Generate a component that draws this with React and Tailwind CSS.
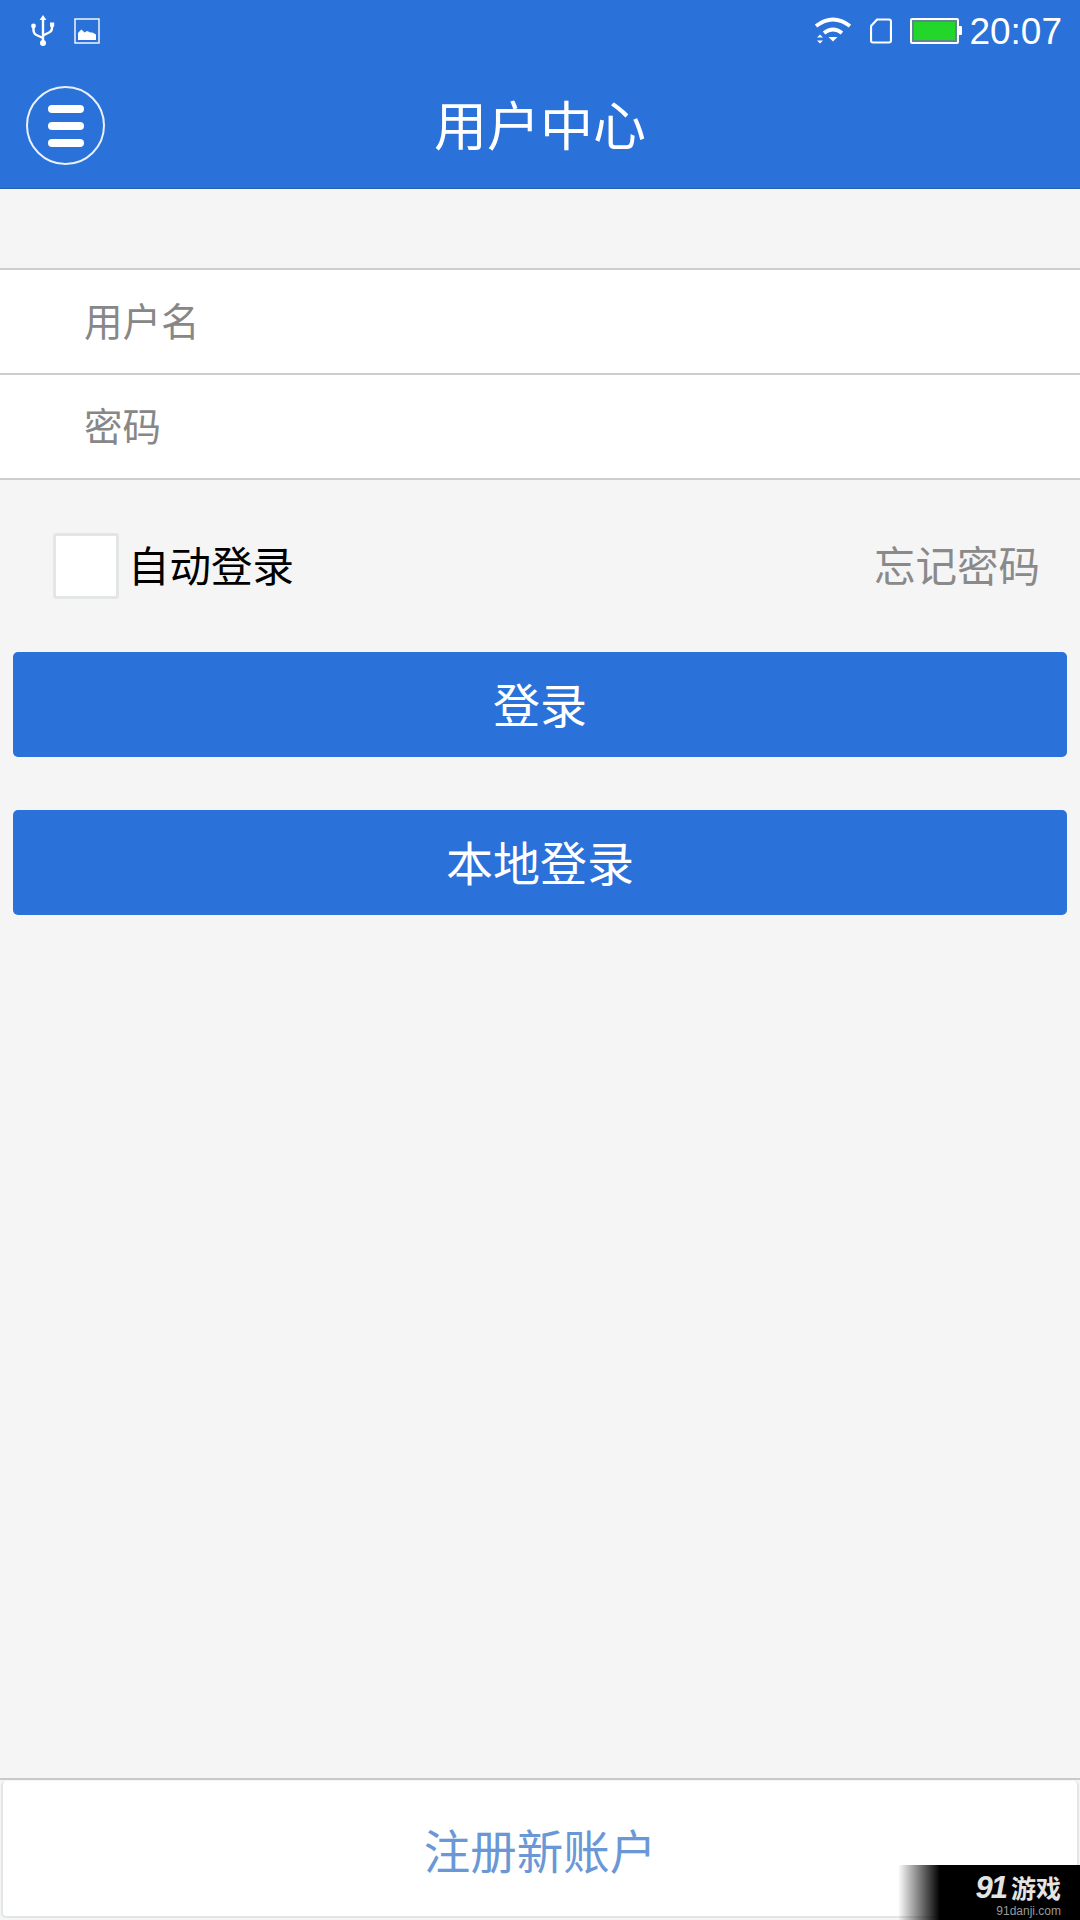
import React from 'react';

const cjk = "font-['Noto_Sans_CJK_SC','Noto_Sans_CJK_JP',sans-serif]";

const StatusBar = () => (
  <div className="flex h-[63px] items-center justify-between pl-[30px] pr-[18px] text-white">
    <div className="flex items-center gap-[18px]">
      {/* usb */}
      <svg width="26" height="32" viewBox="0 0 26 32" fill="none" stroke="white" strokeWidth="2.4" className="mt-[-1px]">
        <path d="M13 3v25" />
        <path d="M13 0l3.400 5h-6.800z" fill="white" stroke="none" />
        <circle cx="13" cy="28" r="3" fill="white" stroke="none" />
        <path d="M3.500 11v4q0 4 4 5.500l5.500 2.500" />
        <circle cx="3.500" cy="11" r="2.400" fill="white" stroke="none" />
        <path d="M22 10v3q0 3.500-4 5l-5 2.500" />
        <rect x="20" y="7.500" width="4.200" height="4.200" fill="white" stroke="none" />
      </svg>
      {/* image */}
      <svg width="26" height="26" viewBox="0 0 26 26" fill="none" className="mt-[-1px]">
        <rect x="1" y="1" width="24" height="24" stroke="white" strokeWidth="1.400" />
        <path d="M4 22v-7q1.500-2 3.500-3.500l3 3 2.500-1.500 3.500 1.500 2 0 3.500 2v5.500z" fill="white" />
      </svg>
    </div>
    <div className="flex items-center">
      {/* wifi */}
      <svg width="38" height="30" viewBox="0 0 38 30" fill="none" stroke="white" strokeWidth="3.800" className="mt-[-4px]">
        <path d="M2 11q17-13 34 0" />
        <path d="M10 18q9-7 18 0" />
        <path d="M14.500 22h9l-4.500 4.500z" fill="white" stroke="none" />
        <path d="M3 22.500l3-3 3 3zM3 25.500h6l-3 3z" fill="white" stroke="none" />
      </svg>
      {/* sim */}
      <svg width="22" height="26" viewBox="0 0 22 26" fill="none" stroke="white" strokeWidth="2.200" className="ml-[18px] mt-[-2px]">
        <path d="M7 1.500h12q2 0 2 2v19q0 2-2 2H3q-2 0-2-2V8z" />
      </svg>
      {/* battery */}
      <div className="ml-[18px] mt-[-2px] flex items-center">
        <div className="h-[26px] w-[49px] rounded-[2px] border-2 border-white bg-[#5a8a90] p-[2px]">
          <div className="h-full w-full bg-[#22d62a]" />
        </div>
        <div className="h-[9px] w-[3px] rounded-r-[1px] bg-white" />
      </div>
      <span className="ml-[7px] font-['Liberation_Sans',sans-serif] text-[37px] leading-none">20:07</span>
    </div>
  </div>
);

const Header = () => (
  <header className="bg-[#2a71d9] shadow-[inset_0_-1px_0_#2360b5]">
    <StatusBar />
    <div className="relative flex h-[126px] items-center justify-center pb-[5px]">
      <div className="absolute left-[26px] top-[23px] flex h-[79px] w-[79px] flex-col items-center justify-center gap-[9px] rounded-full border-2 border-white/90">
        <span className="h-[8px] w-[36px] rounded-full bg-white" />
        <span className="h-[8px] w-[36px] rounded-full bg-white" />
        <span className="h-[8px] w-[36px] rounded-full bg-white" />
      </div>
      <h1 className={`${cjk} text-[53px] font-normal leading-none text-white`}>用户中心</h1>
    </div>
  </header>
);

const Field = ({ label }) => (
  <div className={`${cjk} flex h-[105px] items-center border-b-2 border-[#cdcdcd] bg-white pb-[3px] pl-[84px] text-[38.5px] text-[#878787]`}>
    {label}
  </div>
);

const BlueButton = ({ children }) => (
  <button className={`${cjk} flex h-[105px] w-full items-center justify-center rounded-[5px] bg-[#2a71d9] pb-[3px] text-[47px] font-normal text-white`}>
    {children}
  </button>
);

export default function App() {
  return (
    <div className="relative flex h-[1920px] w-[1080px] flex-col overflow-hidden bg-[#f5f5f5]">
      <Header />

      <div className="mt-[79px] border-t-2 border-[#cdcdcd]">
        <Field label="用户名" />
        <Field label="密码" />
      </div>

      <div className="flex items-center justify-between pl-[53px] pr-[40px] pt-[53px]">
        <div className="flex items-center">
          <div className="h-[66px] w-[66px] rounded-[3px] border-[3px] border-[#e3e6e7] bg-white" />
          <span className={`${cjk} ml-[9px] pb-[2px] text-[41.5px] leading-none text-black`}>自动登录</span>
        </div>
        <span className={`${cjk} pb-[2px] text-[41.5px] leading-none text-[#8a8a8a]`}>忘记密码</span>
      </div>

      <div className="mt-[53px] flex flex-col gap-[53px] px-[13px]">
        <BlueButton>登录</BlueButton>
        <BlueButton>本地登录</BlueButton>
      </div>

      <div className="mt-auto border-t-2 border-[#c9c9c9] pb-[2px] pt-[1px]">
        <div className={`${cjk} mx-[1px] flex h-[137px] items-center justify-center rounded-[5px] border-x-2 border-b-2 border-[#e3e6e7] bg-white text-[46.5px] font-normal text-[#6a97d6]`}>
          注册新账户
        </div>
      </div>

      {/* watermark */}
      <div className="absolute bottom-0 right-0 flex h-[55px] w-[182px] justify-end bg-gradient-to-r from-transparent to-black to-[42px] pr-[19px]">
        <div className="flex flex-col items-end pt-[7px] text-[#e4e4e4]">
          <div className="flex items-center font-bold leading-none">
            <span className="mr-[5px] font-['Liberation_Sans',sans-serif] text-[31px] italic tracking-[-2px]">91</span>
            <span className={`${cjk} text-[25px] font-bold`}>游戏</span>
          </div>
          <span className="mt-[2px] font-['Liberation_Sans',sans-serif] text-[12px] leading-none text-[#9a9a9a]">91danji.com</span>
        </div>
      </div>
    </div>
  );
}
